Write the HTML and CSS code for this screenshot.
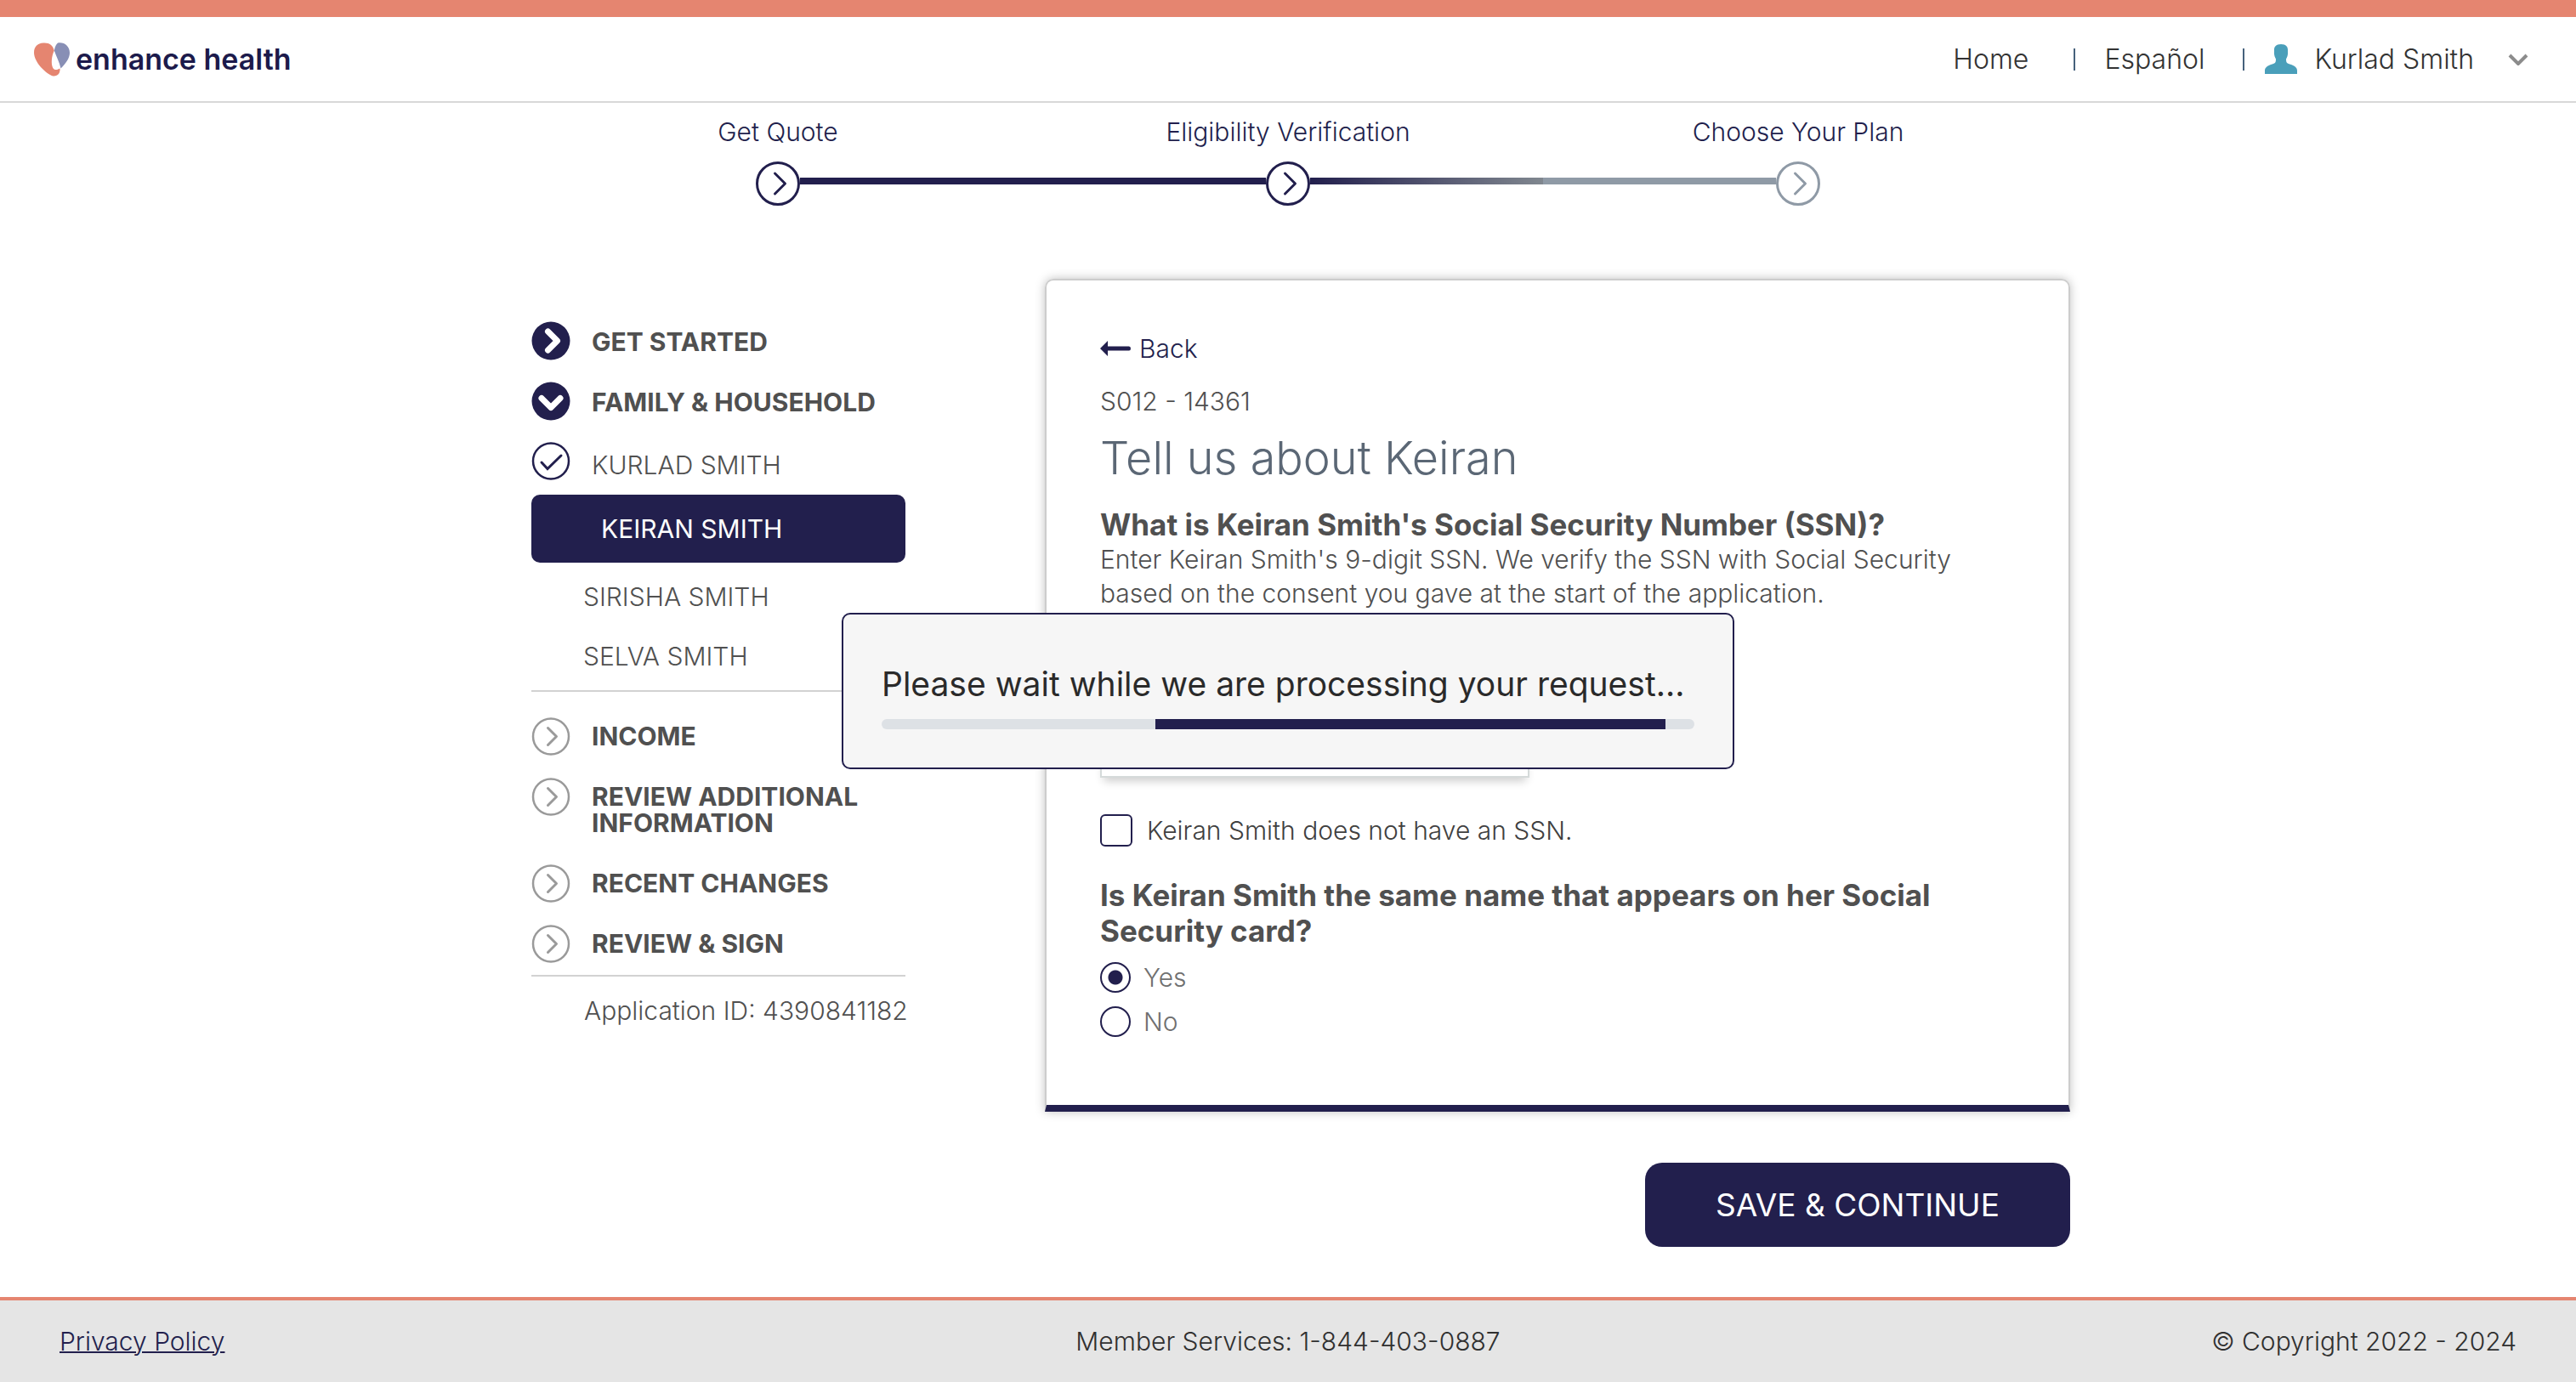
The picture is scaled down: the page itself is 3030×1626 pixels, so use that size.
FILE: index.html
```html
<!DOCTYPE html>
<html lang="en">
<head>
<meta charset="utf-8">
<title>Enhance Health</title>
<link rel="stylesheet" href="styles.css">
</head>
<body>
<svg class="sprite" aria-hidden="true">
  <symbol id="ring-right" viewBox="0 0 52 52">
    <circle cx="26" cy="26" r="24.5" fill="none" stroke="currentColor" stroke-width="3"/>
    <path d="M22.500 14 L34.500 26 L22.500 38" fill="none" stroke="currentColor" stroke-width="3" stroke-linecap="round" stroke-linejoin="round"/>
  </symbol>
  <symbol id="ring-next" viewBox="0 0 46 46">
    <circle cx="23" cy="22.500" r="21" fill="none" stroke="currentColor" stroke-width="2.500"/>
    <path d="M19.500 12.500 L29.500 22.500 L19.500 32.500" fill="none" stroke="currentColor" stroke-width="3" stroke-linecap="round" stroke-linejoin="round"/>
  </symbol>
  <symbol id="ring-check" viewBox="0 0 46 46">
    <circle cx="23" cy="22.500" r="21" fill="none" stroke="currentColor" stroke-width="2.500"/>
    <path d="M12 24 L19 31.500 L35 16" fill="none" stroke="currentColor" stroke-width="3" stroke-linecap="round"/>
  </symbol>
  <symbol id="disc-right" viewBox="0 0 46 46">
    <circle cx="23" cy="23" r="22.500" fill="currentColor"/>
    <path d="M19.500 12 L30.500 23 L19.500 34" fill="none" stroke="#fff" stroke-width="7" stroke-linecap="round" stroke-linejoin="round"/>
  </symbol>
  <symbol id="disc-down" viewBox="0 0 46 46">
    <circle cx="23" cy="23" r="22.500" fill="currentColor"/>
    <path d="M12 19.500 L23 30.500 L34 19.500" fill="none" stroke="#fff" stroke-width="7" stroke-linecap="round" stroke-linejoin="round"/>
  </symbol>
</svg>

<header class="header">
  <a class="brand" href="#">
    <svg class="brand-mark" viewBox="0 0 42 40" aria-hidden="true">
      <path fill="#e58570" d="M11 .5C18 0 22 3 23.800 9.500C20.500 16 20 25 22 29.500C24 33.500 28 32 30.500 30.500C31 36 28 40 22.500 39.500C14 37 0 23 0 12C0 5 4 1 11 .5Z"/>
      <path fill="#888fb5" d="M28 .5C35 -1 42 4 42 12C42 19 37 25 31.500 30.500C30 23 26 16 23.800 9.500C24.500 5 26 2 28 .5Z"/>
    </svg>
    <span>enhance health</span>
  </a>
  <nav class="nav">
    <a class="nav-home" href="#">Home</a>
    <span class="bar"></span>
    <a class="nav-lang" href="#">Español</a>
    <span class="bar"></span>
    <button class="account" type="button">
      <svg class="person" viewBox="0 0 38 35" aria-hidden="true"><path fill="#4a9fba" d="M19 0C25 0 27.500 3 27 8C27.500 14 25.500 16 25 17.500C25 22 26 22.500 31 24C36 26 38 28 38 31V35H0V31C0 28 2 26 7 24C12 22.500 13 22 13 17.500C12.500 16 10.500 14 11 8C10.500 3 13 0 19 0Z"/></svg>
      Kurlad Smith
      <svg class="caret" viewBox="0 0 24 14" aria-hidden="true"><path d="M2 2L12 12L22 2" fill="none" stroke="#8c8c8c" stroke-width="4"/></svg>
    </button>
  </nav>
</header>

<ol class="stepper">
  <li class="step"><span>Get Quote</span>
    <div class="track"><i class="rail rail-none"></i><svg class="step-icon"><use href="#ring-right"/></svg><i class="rail"></i></div></li>
  <li class="step"><span>Eligibility Verification</span>
    <div class="track"><i class="rail"></i><svg class="step-icon"><use href="#ring-right"/></svg><i class="rail rail-fade"></i></div></li>
  <li class="step"><span>Choose Your Plan</span>
    <div class="track"><i class="rail rail-todo"></i><svg class="step-icon todo"><use href="#ring-right"/></svg><i class="rail rail-none"></i></div></li>
</ol>

<main class="main">
  <aside class="side">
    <ul class="sections">
      <li class="section"><svg class="icon"><use href="#disc-right"/></svg><span>GET STARTED</span></li>
      <li class="section"><svg class="icon"><use href="#disc-down"/></svg><span>FAMILY &amp; HOUSEHOLD</span></li>
      <li class="section member-done"><svg class="icon"><use href="#ring-check"/></svg><span>KURLAD SMITH</span></li>
    </ul>
    <ul class="members">
      <li class="member current">KEIRAN SMITH</li>
      <li class="member">SIRISHA SMITH</li>
      <li class="member">SELVA SMITH</li>
    </ul>
    <hr class="rule">
    <ul class="sections upcoming">
      <li class="section"><svg class="icon"><use href="#ring-next"/></svg><span>INCOME</span></li>
      <li class="section"><svg class="icon"><use href="#ring-next"/></svg><span>REVIEW ADDITIONAL INFORMATION</span></li>
      <li class="section"><svg class="icon"><use href="#ring-next"/></svg><span>RECENT CHANGES</span></li>
      <li class="section"><svg class="icon"><use href="#ring-next"/></svg><span>REVIEW &amp; SIGN</span></li>
    </ul>
    <hr class="rule">
    <p class="app-id">Application ID: 4390841182</p>
  </aside>

  <form class="form">
    <div class="card">
      <a class="back" href="#"><svg class="arrow" viewBox="0 0 36 18" aria-hidden="true"><path fill="currentColor" d="M0 9L9 0V6.500H34Q36 6.500 36 9Q36 11.500 34 11.500H9V18Z"/></svg>Back</a>
      <p class="code">S012 - 14361</p>
      <h1 class="title">Tell us about Keiran</h1>
      <h2 class="question" id="ssn-question">What is Keiran Smith's Social Security Number (SSN)?</h2>
      <p class="help">Enter Keiran Smith's 9-digit SSN. We verify the SSN with Social Security<br>based on the consent you gave at the start of the application.</p>
      <input class="ssn" type="text" aria-labelledby="ssn-question">
      <label class="choice no-ssn"><input class="check" type="checkbox">Keiran Smith does not have an SSN.</label>
      <fieldset class="group">
        <legend class="question">Is Keiran Smith the same name that appears on her Social Security card?</legend>
        <label class="choice option"><input class="radio" type="radio" name="same-name" checked>Yes</label>
        <label class="choice option"><input class="radio" type="radio" name="same-name">No</label>
      </fieldset>
    </div>
    <button class="save" type="button">SAVE &amp; CONTINUE</button>
  </form>
</main>

<footer class="footer">
  <a class="privacy" href="#">Privacy Policy</a>
  <span>Member Services: 1-844-403-0887</span>
  <span class="copyright">© Copyright 2022 - 2024</span>
</footer>

<div class="overlay">
  <div class="dialog" role="alertdialog" aria-labelledby="wait-text">
    <p class="wait" id="wait-text">Please wait while we are processing your request...</p>
    <div class="progress" role="progressbar"><div class="progress-fill"></div></div>
  </div>
</div>
</body>
</html>
```

FILE: styles.css
```css
:root {
  --navy: #221f4d;
  --coral: #e58570;
  --ink: #505050;
  --grey: #8f9aa6;
}

* { box-sizing: border-box; }

body {
  margin: 0;
  min-height: 100vh;
  display: flex;
  flex-direction: column;
  background: #fff;
  color: var(--ink);
  font: 300 30px/40px Inter, "Noto Sans", sans-serif;
}

ul, ol { list-style: none; margin: 0; padding: 0; }
p, h1, h2 { margin: 0; }
a { color: inherit; text-decoration: none; }
.sprite { display: none; }

/* Header */
.header {
  display: flex;
  justify-content: space-between;
  align-items: center;
  height: 121px;
  padding: 0 56px 0 40px;
  border-top: 20px solid var(--coral);
  border-bottom: 2px solid #d8d8d8;
}
.brand { display: flex; align-items: center; gap: 7px; color: #1c1a4b; font-size: 34px; font-weight: 600; }
.brand-mark { width: 42px; height: 40px; }
.nav { display: flex; align-items: center; color: #333; font-size: 32px; }
.bar { width: 2px; height: 26px; background: #46617c; }
.nav-home { margin-right: 53px; }
.nav-lang { margin: 0 45px 0 34px; }
.account {
  display: flex;
  align-items: center;
  margin-left: 24px;
  padding: 0;
  border: 0;
  background: none;
  color: inherit;
  font: inherit;
}
.person { width: 38px; height: 35px; margin-right: 20px; }
.caret { width: 24px; height: 14px; margin-left: 40px; }

/* Progress stepper */
.stepper { display: flex; width: 100%; max-width: 1800px; margin: 14px auto 0; color: var(--navy); }
.step { flex: 1; display: flex; flex-direction: column; gap: 15px; text-align: center; }
.track { display: flex; align-items: center; }
.step-icon { width: 52px; height: 52px; }
.todo { color: var(--grey); }
.rail { flex: 1; height: 8px; margin-bottom: 6px; background: var(--navy); }
.rail-none { background: none; }
.rail-fade { background: linear-gradient(to right, var(--navy), #80878f); }
.rail-todo { background: var(--grey); }

/* Page columns */
.main {
  display: grid;
  grid-template-columns: 440px 1fr;
  gap: 164px;
  width: 100%;
  max-width: 1840px;
  margin: 86px auto 0;
  padding: 0 0 58px 30px;
}

/* Application sections */
.side { padding-top: 50px; }
.sections { display: flex; flex-direction: column; gap: 25px; }
.section { display: flex; gap: 25px; font-weight: 700; line-height: 31px; }
.section span { padding: 9px 0 6px; }
.icon { flex: none; width: 46px; height: 46px; color: var(--navy); }
.upcoming { margin-top: 30px; }
.upcoming .icon { color: #9a9a9a; }
.upcoming span { padding: 7px 0 8px; }
.section.member-done { font-weight: 300; line-height: 37px; }
.member-done span { padding-bottom: 0; }
.members { margin: 16px 0 5px; }
.member { padding-left: 61px; line-height: 70px; }
.current {
  margin-bottom: 5px;
  padding-left: 82px;
  border-radius: 10px;
  background: var(--navy);
  color: #fff;
  font-weight: 400;
  line-height: 80px;
}
.rule { height: 2px; margin: 0; border: 0; background: #d2d2d2; }
.upcoming + .rule { margin-top: 13px; }
.app-id { margin-top: 20px; padding-left: 62px; white-space: nowrap; }

/* Form card */
.form { display: flex; flex-direction: column; align-items: flex-end; gap: 60px; }
.card {
  width: 100%;
  padding: 60px 63px 80px;
  border: 2px solid #ccc;
  border-bottom: 8px solid var(--navy);
  border-radius: 10px 10px 0 0;
  box-shadow: 0 0 12px rgba(0, 0, 0, .25);
}
.back { display: flex; align-items: center; gap: 10px; color: var(--navy); }
.arrow { width: 36px; height: 18px; }
.code { margin-top: 22px; }
.title { margin-top: 17px; color: #5b6775; font-size: 54px; font-weight: 300; line-height: 60px; }
.question { padding: 0; font-size: 35px; font-weight: 700; line-height: 42px; }
.title + .question { margin-top: 27px; }
.ssn {
  display: block;
  width: 505px;
  height: 72px;
  margin-top: 125px;
  border: 2px solid #d5dada;
  background: #fff;
  box-shadow: 0 8px 10px -4px rgba(0, 0, 0, .2);
  font: inherit;
}
.choice { display: flex; align-items: center; }
.no-ssn { gap: 17px; height: 38px; margin-top: 43px; color: #404040; }
.check, .radio { appearance: none; flex: none; margin: 0; border: 2px solid var(--navy); background: #fff; }
.check { width: 38px; height: 38px; border-radius: 6px; }
.group { margin: 36px 0 0; padding: 0; border: 0; min-width: 0; }
.option { gap: 15px; height: 36px; margin-top: 16px; color: #707070; }
.radio { width: 36px; height: 36px; border-radius: 50%; }
.radio:checked { background: radial-gradient(circle, var(--navy) 8px, #fff 9px); }
.save {
  width: 500px;
  height: 99px;
  border: 0;
  border-radius: 20px;
  background: var(--navy);
  color: #fff;
  font: 400 37px/44px Inter, "Noto Sans", sans-serif;
}

/* Footer */
.footer {
  display: grid;
  grid-template-columns: 1fr auto 1fr;
  align-items: center;
  height: 100px;
  margin-top: auto;
  padding: 0 70px;
  border-top: 4px solid var(--coral);
  background: #e5e5e5;
  color: #303030;
}
.privacy { justify-self: start; color: var(--navy); text-decoration: underline; text-decoration-thickness: 2px; }
.copyright { justify-self: end; }

/* Processing dialog */
.overlay { position: fixed; inset: 0; display: flex; align-items: center; justify-content: center; }
.dialog {
  width: 1050px;
  padding: 60px 45px 45px;
  border: 2px solid var(--navy);
  border-radius: 10px;
  background: #f6f6f6;
}
.wait { color: #2a2a2a; font-size: 39px; font-weight: 400; line-height: 44px; white-space: nowrap; }
.progress { height: 12px; margin-top: 19px; padding: 0 34px 0 322px; border-radius: 6px; background: #dde1e5; }
.progress-fill { height: 12px; background: var(--navy); }
```
